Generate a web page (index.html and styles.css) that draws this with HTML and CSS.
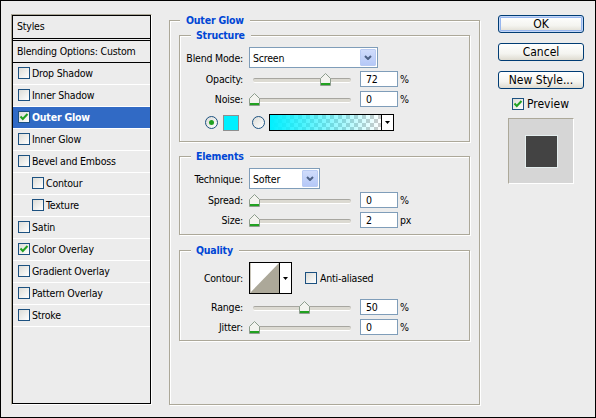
FILE: index.html
```html
<!DOCTYPE html>
<html>
<head>
<meta charset="utf-8">
<title>Layer Style</title>
<link rel="stylesheet" href="styles.css">
</head>
<body>
<div class="window">
  <div class="styles-panel">
    <div class="styles-inner">
      <div class="sp-head">Styles</div>
      <div class="sp-blend">Blending Options: Custom</div>
      <div class="sp-row"><span class="cb"></span>Drop Shadow</div>
      <div class="sp-row"><span class="cb"></span>Inner Shadow</div>
      <div class="sp-row sel"><span class="cb"><svg width="10" height="10" viewBox="0 0 10 10"><path d="M1.5 4.5 L3.8 7 L8.5 2" fill="none" stroke="#21a121" stroke-width="2"/></svg></span>Outer Glow</div>
      <div class="sp-row"><span class="cb"></span>Inner Glow</div>
      <div class="sp-row"><span class="cb"></span>Bevel and Emboss</div>
      <div class="sp-row sub"><span class="cb"></span>Contour</div>
      <div class="sp-row sub"><span class="cb"></span>Texture</div>
      <div class="sp-row"><span class="cb"></span>Satin</div>
      <div class="sp-row"><span class="cb"><svg width="10" height="10" viewBox="0 0 10 10"><path d="M1.5 4.5 L3.8 7 L8.5 2" fill="none" stroke="#21a121" stroke-width="2"/></svg></span>Color Overlay</div>
      <div class="sp-row"><span class="cb"></span>Gradient Overlay</div>
      <div class="sp-row"><span class="cb"></span>Pattern Overlay</div>
      <div class="sp-row"><span class="cb"></span>Stroke</div>
    </div>
  </div>

  <fieldset class="group main">
    <legend>Outer Glow</legend>

    <fieldset class="group sub-group structure">
      <legend>Structure</legend>
      <div class="row h21 mb3">
        <span class="lbl">Blend Mode:</span>
        <div class="select w-blend"><span>Screen</span><span class="sel-btn"><svg width="8" height="5" viewBox="0 0 8 5"><polyline points="1,1 4,4 7,1" fill="none" stroke="#4d6185" stroke-width="2"/></svg></span></div>
      </div>
      <div class="row h16 mb4">
        <span class="lbl">Opacity:</span>
        <div class="slider"><span class="thumb" style="left:71px"><svg width="11" height="13" viewBox="0 0 11 13"><path d="M0.5 5.5 L5.5 0.5 L10.5 5.5 V12.5 H0.5 Z" fill="#f3f3ef" stroke="#8d9d8d"/><rect x="1" y="10" width="9" height="2" fill="#21a121"/></svg></span></div>
        <span class="num">72</span><span class="unit">%</span>
      </div>
      <div class="row h16 mb7">
        <span class="lbl">Noise:</span>
        <div class="slider"><span class="thumb" style="left:0px"><svg width="11" height="13" viewBox="0 0 11 13"><path d="M0.5 5.5 L5.5 0.5 L10.5 5.5 V12.5 H0.5 Z" fill="#f3f3ef" stroke="#8d9d8d"/><rect x="1" y="10" width="9" height="2" fill="#21a121"/></svg></span></div>
        <span class="num">0</span><span class="unit">%</span>
      </div>
      <div class="row h17 color-row">
        <span class="radio on"></span>
        <span class="swatch"></span>
        <span class="radio"></span>
        <div class="gradbox"><span class="grad"></span><span class="drop"><svg width="5" height="3" viewBox="0 0 5 3"><polygon points="0,0 5,0 2.5,3" fill="#000"/></svg></span></div>
      </div>
    </fieldset>

    <fieldset class="group sub-group elements">
      <legend>Elements</legend>
      <div class="row h21 mb3">
        <span class="lbl">Technique:</span>
        <div class="select w-tech"><span>Softer</span><span class="sel-btn"><svg width="8" height="5" viewBox="0 0 8 5"><polyline points="1,1 4,4 7,1" fill="none" stroke="#4d6185" stroke-width="2"/></svg></span></div>
      </div>
      <div class="row h16 mb4">
        <span class="lbl">Spread:</span>
        <div class="slider"><span class="thumb" style="left:0px"><svg width="11" height="13" viewBox="0 0 11 13"><path d="M0.5 5.5 L5.5 0.5 L10.5 5.5 V12.5 H0.5 Z" fill="#f3f3ef" stroke="#8d9d8d"/><rect x="1" y="10" width="9" height="2" fill="#21a121"/></svg></span></div>
        <span class="num">0</span><span class="unit">%</span>
      </div>
      <div class="row h16">
        <span class="lbl">Size:</span>
        <div class="slider"><span class="thumb" style="left:0px"><svg width="11" height="13" viewBox="0 0 11 13"><path d="M0.5 5.5 L5.5 0.5 L10.5 5.5 V12.5 H0.5 Z" fill="#f3f3ef" stroke="#8d9d8d"/><rect x="1" y="10" width="9" height="2" fill="#21a121"/></svg></span></div>
        <span class="num">2</span><span class="unit">px</span>
      </div>
    </fieldset>

    <fieldset class="group sub-group quality">
      <legend>Quality</legend>
      <div class="row h32 mb5">
        <span class="lbl">Contour:</span>
        <div class="contour">
          <span class="curve"><svg width="29" height="30" viewBox="0 0 29 30"><rect width="29" height="30" fill="#fff"/><polygon points="0,30 29,0 29,30" fill="#aca899"/><rect x="0" y="0" width="1" height="30" fill="#c8c4b8"/></svg></span>
          <span class="drop"><svg width="5" height="3" viewBox="0 0 5 3"><polygon points="0,0 5,0 2.5,3" fill="#000"/></svg></span>
        </div>
        <span class="cb aa"></span><span>Anti-aliased</span>
      </div>
      <div class="row h16 mb4">
        <span class="lbl">Range:</span>
        <div class="slider"><span class="thumb" style="left:50px"><svg width="11" height="13" viewBox="0 0 11 13"><path d="M0.5 5.5 L5.5 0.5 L10.5 5.5 V12.5 H0.5 Z" fill="#f3f3ef" stroke="#8d9d8d"/><rect x="1" y="10" width="9" height="2" fill="#21a121"/></svg></span></div>
        <span class="num">50</span><span class="unit">%</span>
      </div>
      <div class="row h16">
        <span class="lbl">Jitter:</span>
        <div class="slider"><span class="thumb" style="left:0px"><svg width="11" height="13" viewBox="0 0 11 13"><path d="M0.5 5.5 L5.5 0.5 L10.5 5.5 V12.5 H0.5 Z" fill="#f3f3ef" stroke="#8d9d8d"/><rect x="1" y="10" width="9" height="2" fill="#21a121"/></svg></span></div>
        <span class="num">0</span><span class="unit">%</span>
      </div>
    </fieldset>
  </fieldset>

  <div class="side">
    <div class="btn default">OK</div>
    <div class="btn">Cancel</div>
    <div class="btn">New Style...</div>
    <div class="preview-row"><span class="cb"><svg width="10" height="10" viewBox="0 0 10 10"><path d="M1.5 4.5 L3.8 7 L8.5 2" fill="none" stroke="#21a121" stroke-width="2"/></svg></span><span>Preview</span></div>
    <div class="preview-box"><span class="preview-square"></span></div>
  </div>
</div>
</body>
</html>
```
FILE: styles.css
```css
* { box-sizing: border-box; }
html, body { margin: 0; padding: 0; }
body {
  width: 596px;
  height: 418px;
  background: #ececec;
  font-family: "DejaVu Sans Condensed", "Liberation Sans", Arial, sans-serif;
  font-size: 10.5px;
  letter-spacing: -0.2px;
  color: #000;
  overflow: hidden;
}
.window {
  width: 596px;
  height: 418px;
  border: 1px solid #000;
  background: #ececec;
  display: flex;
  align-items: flex-start;
  padding: 13px 0 0 10px;
}

/* Styles list */
.styles-panel {
  flex: none;
  width: 141px;
  height: 391px;
  border: 1px solid;
  border-color: #aca899 #fff #fff #aca899;
}
.styles-inner {
  height: 100%;
  border: 1px solid #000;
  background: #ececec;
}
.sp-head {
  height: 25px;
  line-height: 20px;
  padding-left: 4px;
  border-bottom: 3px double #000;
}
.sp-blend {
  height: 22px;
  line-height: 21px;
  padding-left: 4px;
  border-bottom: 1px solid #000;
}
.sp-row {
  height: 22px;
  display: flex;
  align-items: center;
  padding-left: 5px;
  padding-bottom: 1px;
  border-bottom: 1px solid #fff;
}
.sp-row.sub { padding-left: 19px; }
.sp-row.sel {
  background: #316ac5;
  color: #fff;
  font-weight: bold;
}
.sp-row .cb { margin-right: 2px; }

.cb {
  flex: none;
  width: 12px;
  height: 12px;
  border: 1px solid #1c5180;
  background: linear-gradient(135deg, #dcdcd7, #fff);
  display: inline-flex;
  align-items: center;
  justify-content: center;
}

/* Group boxes */
.group {
  margin: 0;
  min-width: 0;
  border: 1px solid #aca899;
  box-shadow: 1px 1px 0 #fff, inset 1px 1px 0 #fff;
}
.group > legend {
  line-height: 13px;
  font-weight: bold;
  color: #0046d5;
  background: #ececec;
}
.main {
  flex: none;
  width: 311px;
  height: 391px;
  margin-left: 17px;
  padding: 2px 9px 0 9px;
}
.main > legend {
  margin-left: 1px;
  padding: 0 6px;
}
.sub-group {
  width: 291px;
  padding: 5px 0 0 0;
}
.sub-group > legend {
  margin-left: 11px;
  padding: 0 6px 0 5px;
}
.structure { padding-bottom: 10px; }
.elements { margin-top: 8px; padding-bottom: 6px; }
.quality { margin-top: 9px; padding-bottom: 5px; }

.row { display: flex; align-items: center; }
.h16 { height: 16px; }
.h17 { height: 17px; }
.h21 { height: 21px; }
.h32 { height: 32px; }
.mb3 { margin-bottom: 3px; }
.mb4 { margin-bottom: 4px; }
.mb5 { margin-bottom: 5px; }
.mb7 { margin-bottom: 7px; }

.lbl {
  flex: none;
  width: 63px;
  text-align: right;
  margin-right: 6px;
}

/* Select */
.select {
  flex: none;
  height: 21px;
  border: 1px solid #7f9db9;
  background: #fff;
  display: flex;
  align-items: center;
  justify-content: space-between;
  padding: 0 1px 0 3px;
}
.w-blend { width: 129px; }
.w-tech { width: 71px; }
.sel-btn {
  width: 16px;
  height: 17px;
  border: 1px solid #b9cbf3;
  border-radius: 1px;
  background: linear-gradient(#d0dcfb, #b5c8f7);
  display: flex;
  align-items: center;
  justify-content: center;
}

/* Slider */
.slider {
  flex: none;
  position: relative;
  width: 102px;
  height: 16px;
  margin-right: 9px;
}
.slider::before {
  content: "";
  position: absolute;
  left: 4px;
  right: 0;
  top: 7px;
  height: 3px;
  border-radius: 2px;
  border-top: 1px solid #a7a6a0;
  border-bottom: 1px solid #fff;
  background: #dcdad2;
}
.thumb {
  position: absolute;
  top: 2px;
  width: 11px;
  height: 13px;
  display: block;
}
.thumb svg { display: block; }

.num {
  flex: none;
  width: 38px;
  height: 16px;
  border: 1px solid #7f9db9;
  background: #fff;
  padding-left: 5px;
  line-height: 14px;
  margin-right: 2px;
}

/* Color row */
.color-row { padding-left: 25px; }
.radio {
  flex: none;
  width: 13px;
  height: 13px;
  border-radius: 50%;
  border: 1px solid #1c5180;
  background: linear-gradient(135deg, #dcdcd7, #fff);
  display: flex;
  align-items: center;
  justify-content: center;
  margin-right: 4px;
}
.radio.on { margin-right: 5px; }
.radio.on::after {
  content: "";
  width: 5px;
  height: 5px;
  border-radius: 50%;
  background: #21a121;
}
.swatch {
  flex: none;
  width: 16px;
  height: 16px;
  border: 1px solid #8f8f8f;
  background: #00f0ff;
  margin-right: 13px;
}
.gradbox {
  flex: none;
  width: 125px;
  height: 17px;
  border: 1px solid #000;
  display: flex;
  background: #fff;
}
.grad {
  flex: 1;
  border-right: 1px solid #000;
  background-image: linear-gradient(to right, #00f0ff, rgba(0, 240, 255, 0)),
    conic-gradient(#cccccc 25%, #ffffff 0 50%, #cccccc 0 75%, #ffffff 0);
  background-size: 100% 100%, 8px 8px;
}
.drop {
  flex: none;
  width: 11px;
  display: flex;
  align-items: center;
  justify-content: center;
  background: #fff;
}
.drop svg { display: block; }

/* Contour */
.contour {
  flex: none;
  width: 43px;
  height: 32px;
  border: 1px solid #000;
  display: flex;
  margin-right: 13px;
}
.curve {
  flex: none;
  width: 30px;
  border-right: 1px solid #000;
}
.curve svg { display: block; }
.contour .drop { width: 11px; }
.cb.aa { margin-right: 3px; }

/* Right column */
.side {
  flex: none;
  width: 86px;
  margin-left: 18px;
  padding-top: 1px;
  display: flex;
  flex-direction: column;
  font-size: 12px;
  letter-spacing: 0;
}
.btn {
  height: 18px;
  margin-bottom: 10px;
  border: 1px solid #003c74;
  border-radius: 3px;
  background: linear-gradient(#ffffff, #f4f4f0 60%, #dedbd0);
  text-align: center;
  line-height: 16px;
}
.btn.default {
  box-shadow: inset 0 0 0 1px #c2d6f8, inset 0 0 0 2px #97b6ee;
}
.preview-row {
  margin-top: -1px;
  height: 12px;
  display: flex;
  align-items: center;
  padding-left: 14px;
}
.preview-row .cb { margin-right: 3px; }
.preview-box {
  margin-top: 8px;
  margin-left: 10px;
  width: 66px;
  height: 66px;
  border: 1px solid;
  border-color: #aca899 #fff #fff #aca899;
  background: #d6d6d6;
  display: flex;
  align-items: center;
  justify-content: center;
}
.preview-square {
  width: 33px;
  height: 33px;
  background: #434343;
  border: 1px solid #e4eeee;
}
```
